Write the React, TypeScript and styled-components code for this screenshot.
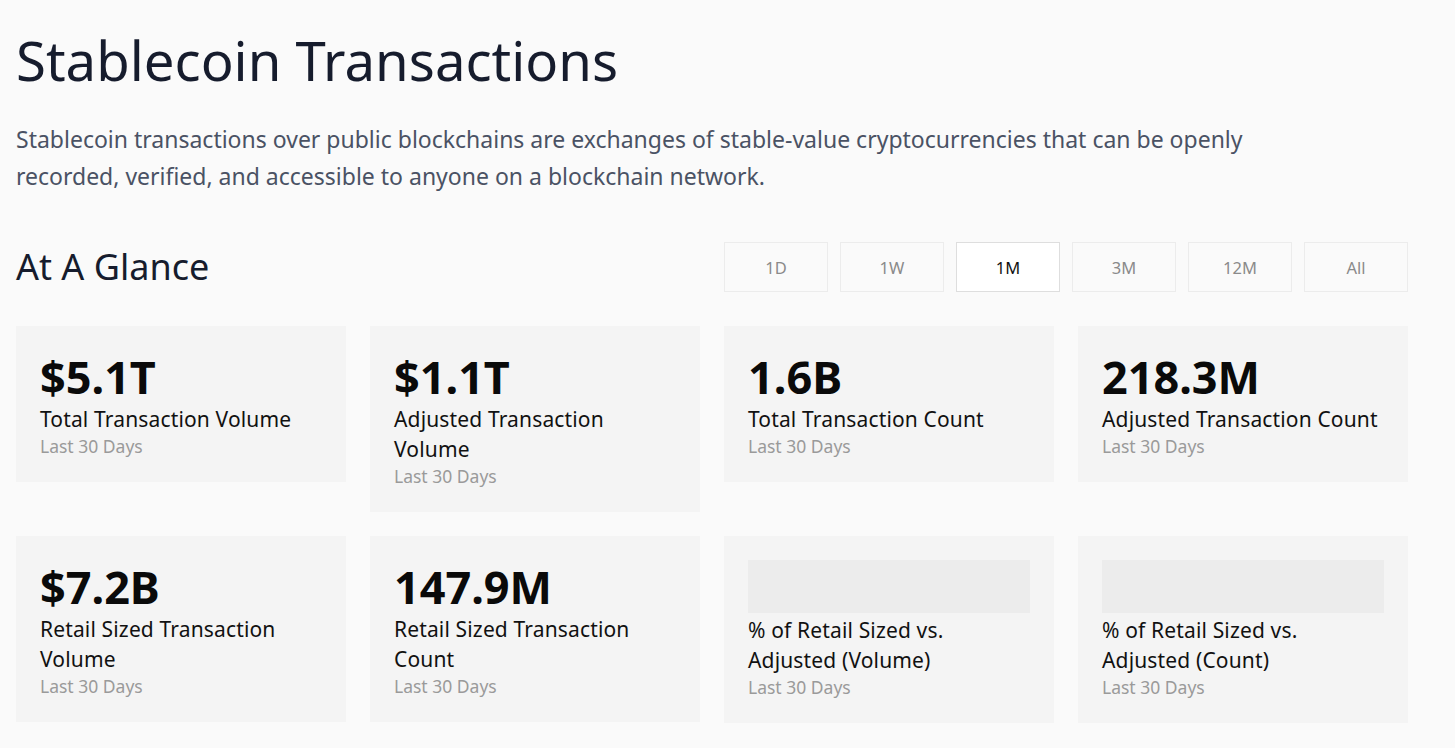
import React, { useState } from "react";
import styled, { createGlobalStyle } from "styled-components";

const GlobalStyle = createGlobalStyle`
  html, body {
    margin: 0;
    padding: 0;
    background: #fafafa;
  }
  body {
    font-family: "Noto Sans", "Open Sans", Arial, sans-serif;
    color: #161c2d;
  }
`;

const Page = styled.div`
  padding: 20px 47px 24px 16px;
`;

const Title = styled.h1`
  margin: 0;
  font-size: 54.5px;
  line-height: 80px;
  font-weight: 400;
  color: #161c2d;
`;

const Intro = styled.p`
  margin: 21px 0 0;
  max-width: 1260px;
  font-size: 23px;
  line-height: 37px;
  color: #4a5264;
`;

const SectionHead = styled.div`
  display: flex;
  align-items: center;
  justify-content: space-between;
  margin-top: 47px;
`;

const SectionTitle = styled.h2`
  margin: 0;
  font-size: 36px;
  line-height: 50px;
  font-weight: 400;
  color: #161c2d;
`;

const Ranges = styled.div`
  display: flex;
  gap: 12px;
`;

const RangeButton = styled.button<{ $active?: boolean }>`
  width: 104px;
  height: 50px;
  padding: 0;
  font-family: inherit;
  font-size: 16.5px;
  background: ${(p) => (p.$active ? "#ffffff" : "transparent")};
  color: ${(p) => (p.$active ? "#111111" : "#8a8a8a")};
  border: 1px solid ${(p) => (p.$active ? "#dedede" : "#ececec")};
  cursor: pointer;
`;

const Grid = styled.div`
  display: grid;
  grid-template-columns: repeat(4, 1fr);
  gap: 24px;
  margin-top: 34px;
  align-items: start;
`;

const Card = styled.div`
  background: #f4f4f4;
  padding: 24px;
`;

const Value = styled.div`
  font-size: 45px;
  line-height: 54px;
  font-weight: 700;
  color: #0a0a0a;
`;

const Skeleton = styled.div`
  height: 53px;
  background: #ececec;
  margin-bottom: 2px;
`;

const Label = styled.div`
  font-size: 21px;
  line-height: 30px;
  letter-spacing: 0.15px;
  color: #111111;
`;

const Period = styled.div`
  font-size: 17.5px;
  line-height: 24px;
  color: #9a9a9a;
`;

interface Metric {
  value?: string;
  label: string;
}

const metrics: Metric[] = [
  { value: "$5.1T", label: "Total Transaction Volume" },
  { value: "$1.1T", label: "Adjusted Transaction Volume" },
  { value: "1.6B", label: "Total Transaction Count" },
  { value: "218.3M", label: "Adjusted Transaction Count" },
  { value: "$7.2B", label: "Retail Sized Transaction Volume" },
  { value: "147.9M", label: "Retail Sized Transaction Count" },
  { label: "% of Retail Sized vs. Adjusted (Volume)" },
  { label: "% of Retail Sized vs. Adjusted (Count)" },
];

const ranges = ["1D", "1W", "1M", "3M", "12M", "All"];

export default function App() {
  const [range, setRange] = useState("1M");
  return (
    <Page>
      <GlobalStyle />
      <Title>Stablecoin Transactions</Title>
      <Intro>
        Stablecoin transactions over public blockchains are exchanges of
        stable-value cryptocurrencies that can be openly recorded, verified, and
        accessible to anyone on a blockchain network.
      </Intro>
      <SectionHead>
        <SectionTitle>At A Glance</SectionTitle>
        <Ranges>
          {ranges.map((r) => (
            <RangeButton key={r} $active={r === range} onClick={() => setRange(r)}>
              {r}
            </RangeButton>
          ))}
        </Ranges>
      </SectionHead>
      <Grid>
        {metrics.map((m) => (
          <Card key={m.label}>
            {m.value ? <Value>{m.value}</Value> : <Skeleton />}
            <Label>{m.label}</Label>
            <Period>Last 30 Days</Period>
          </Card>
        ))}
      </Grid>
    </Page>
  );
}
